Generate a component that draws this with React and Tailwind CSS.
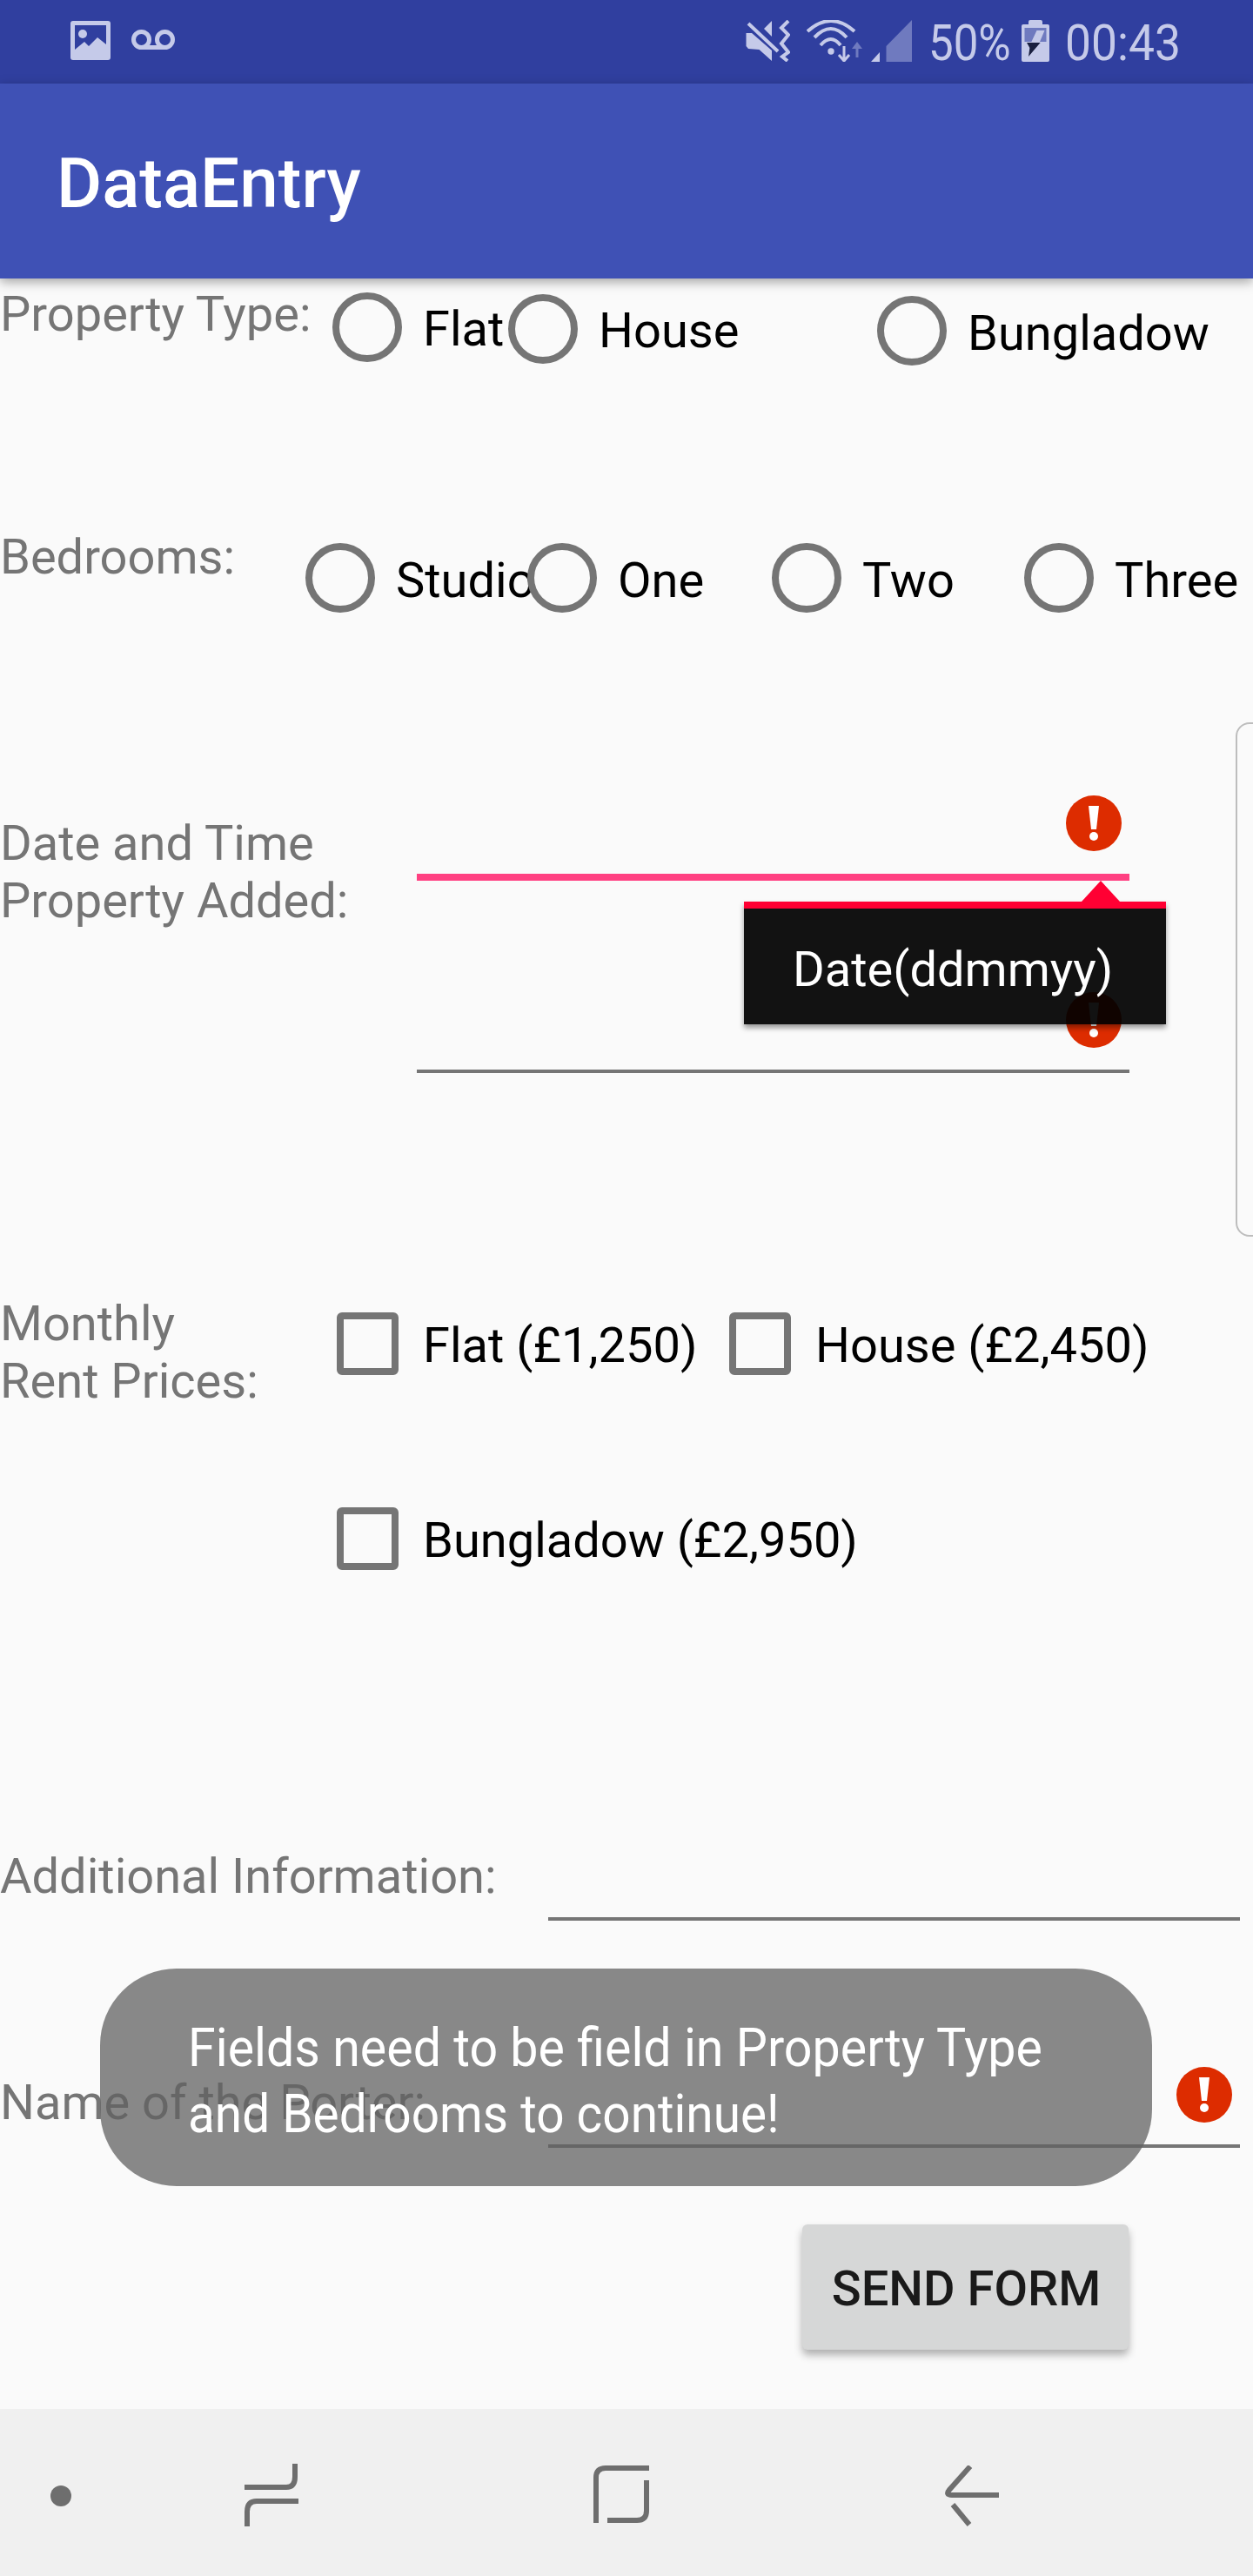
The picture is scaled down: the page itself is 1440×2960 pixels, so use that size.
import React from 'react';

function ErrorIcon() {
  return (
    <svg width="64" height="64" viewBox="0 0 64 64" className="block">
      <circle cx="32" cy="32" r="32" fill="#DD2C00" />
      <polygon points="26,12 38,12 35,39 29,39" fill="#fff" />
      <circle cx="32" cy="47" r="5" fill="#fff" />
    </svg>
  );
}

function Radio({ label, width, top, textTop }) {
  return (
    <div className={`flex items-start gap-[24px] text-[56px] leading-[66px] text-black ${width} ${top}`}>
      <span className="w-20 h-20 shrink-0 rounded-full border-8 border-[#757575]" />
      <span className={`whitespace-nowrap ${textTop}`}>{label}</span>
    </div>
  );
}

function Check({ label, width }) {
  return (
    <div className={`flex items-start gap-[28px] text-[56px] leading-[66px] text-black ${width}`}>
      <span className="w-[71px] h-[72px] shrink-0 rounded-[6px] border-8 border-[#757575]" />
      <span className="whitespace-nowrap mt-[5px]">{label}</span>
    </div>
  );
}

function StatusIcons() {
  const light = '#C5CAE9';
  const dim = '#6F7ABF';
  return (
    <>
      <svg width="51" height="48" viewBox="0 0 51 48" className="mr-[19px]">
        <polygon points="0.5,15 7,15 30,35 30,47 15.5,34 3,33 0.5,30" fill={light} />
        <polygon points="30,1 30,19 21,10" fill={light} />
        <line x1="3" y1="4" x2="37" y2="36" stroke={light} strokeWidth="4" />
        <path d="M49 1 L41 9 L49 17 L41 27 L49 37 L42 42 L48 47" fill="none" stroke={light} strokeWidth="4" />
      </svg>
      <svg width="65" height="48" viewBox="0 0 65 48" className="mr-[9px]">
        <path d="M1 13 Q28 -11 55 13" fill="none" stroke={light} strokeWidth="4" />
        <path d="M9 20 Q28 0 46 20" fill="none" stroke={light} strokeWidth="4" />
        <path d="M16 29 Q28 15 39 29" fill="none" stroke={light} strokeWidth="4" />
        <circle cx="28" cy="36" r="3.7" fill={light} />
        <path d="M43 30 V46 M37 40 L43 47 L49 40" fill="none" stroke={light} strokeWidth="3" />
        <path d="M58 33 V43" stroke={dim} strokeWidth="3" />
        <polygon points="52,33 58,25 64,33" fill={dim} />
      </svg>
      <svg width="47" height="48" viewBox="0 0 47 48" className="mr-[19px]">
        <polygon points="0,48 10,48 10,37" fill={light} />
        <polygon points="17.5,48 47,48 47,0 17.5,30" fill={dim} />
      </svg>
      <div className="w-[95px] mr-[12px] -mt-[3px]">
        <span className="block origin-left scale-x-[0.88] whitespace-nowrap text-[58px] leading-[58px] text-[#C5CAE9]">50%</span>
      </div>
      <svg width="32" height="48" viewBox="0 0 32 48" className="mr-[18px]">
        <rect x="8" y="0" width="16" height="7" rx="2" fill={light} />
        <rect x="0" y="5" width="32" height="43" rx="2" fill={light} />
        <rect x="3.5" y="9" width="25" height="16" fill={dim} />
        <polygon points="11.4,25 17.5,12 26.5,12 21,25" fill={light} />
        <polygon points="6,26 21.6,26 8,42 9.4,32" fill="#1A2040" />
      </svg>
      <div className="w-[128px] -mt-[3px]">
        <span className="block origin-left scale-x-[0.92] whitespace-nowrap text-[58px] leading-[58px] text-[#C5CAE9]">00:43</span>
      </div>
    </>
  );
}

export default function App() {
  return (
    <div className="relative w-[1440px] h-[2960px] overflow-hidden flex flex-col bg-[#FAFAFA] font-['Roboto',sans-serif]">
      {/* status bar */}
      <div className="h-[96px] shrink-0 bg-[#303F9F] flex items-start justify-between pt-[23px] pl-[81px] pr-[88px]">
        <div className="flex items-start">
          <svg width="46" height="45" viewBox="0 0 46 45" className="mr-[24px] mt-px">
            <rect width="46" height="45" rx="3" fill="#C5CAE9" />
            <rect x="5" y="5" width="36" height="32" fill="#303F9F" />
            <circle cx="14" cy="15" r="5" fill="#C5CAE9" />
            <polygon points="5,33 16,24 21,29 31,19 41,27 41,40 5,40" fill="#C5CAE9" />
          </svg>
          <svg width="50" height="23" viewBox="0 0 50 23" className="mt-[11px]">
            <circle cx="11.5" cy="11.5" r="9" fill="none" stroke="#C5CAE9" strokeWidth="5" />
            <circle cx="38.5" cy="11.5" r="9" fill="none" stroke="#C5CAE9" strokeWidth="5" />
            <line x1="11.5" y1="20.5" x2="38.5" y2="20.5" stroke="#C5CAE9" strokeWidth="5" />
          </svg>
        </div>
        <div className="flex items-start">
          <StatusIcons />
        </div>
      </div>

      {/* app bar */}
      <div className="relative z-10 h-[224px] shrink-0 bg-[#3F51B5] pt-[75px] pl-[65px] shadow-[0_4px_12px_rgba(0,0,0,0.35)]">
        <h1 className="text-[80px] leading-[80px] font-medium text-white">DataEntry</h1>
      </div>

      {/* form */}
      <div className="flex-1 flex flex-col text-[56px] leading-[66px] text-[#757575]">
        <div className="flex items-start h-[287px]">
          <div className="w-[382px] shrink-0 pt-[8px] whitespace-nowrap">Property Type:</div>
          <Radio label="Flat" width="w-[202px]" top="mt-[16px]" textTop="mt-[9px]" />
          <Radio label="House" width="w-[424px]" top="mt-[18px]" textTop="mt-[9px]" />
          <Radio label="Bungladow" width="w-[400px]" top="mt-[20px]" textTop="mt-[10px]" />
        </div>

        <div className="flex items-start h-[307px]">
          <div className="w-[351px] shrink-0">Bedrooms:</div>
          <Radio label="Studio" width="w-[255px]" top="mt-[17px]" textTop="mt-[10px]" />
          <Radio label="One" width="w-[281px]" top="mt-[17px]" textTop="mt-[10px]" />
          <Radio label="Two" width="w-[290px]" top="mt-[17px]" textTop="mt-[10px]" />
          <Radio label="Three" width="w-[240px]" top="mt-[17px]" textTop="mt-[10px]" />
        </div>

        <div className="flex items-start h-[574px]">
          <div className="w-[479px] shrink-0 pt-[22px]">
            Date and Time
            <br />
            Property Added:
          </div>
          <div className="w-[819px] shrink-0">
            <div className="h-[98px] border-b-8 border-[#FF4081] flex justify-end pr-[9px]">
              <ErrorIcon />
            </div>
            <div className="h-[221px] border-b-4 border-[#757575] flex justify-end pr-[9px] pt-[128px]">
              <ErrorIcon />
            </div>
          </div>
        </div>

        <div className="flex items-start h-[635px]">
          <div className="w-[387px] shrink-0">
            Monthly
            <br />
            Rent Prices:
          </div>
          <div className="flex flex-wrap pt-[20px] gap-y-[152px]">
            <Check label="Flat (£1,250)" width="w-[451px]" />
            <Check label="House (£2,450)" width="w-[520px]" />
            <Check label="Bungladow (£2,950)" width="w-[700px]" />
          </div>
        </div>

        <div className="flex items-start h-[252px]">
          <div className="w-[630px] shrink-0 whitespace-nowrap">Additional Information:</div>
          <div className="w-[795px] h-[84px] border-b-4 border-[#757575]" />
        </div>

        <div className="flex items-start h-[181px]">
          <div className="w-[630px] shrink-0 pt-[8px] whitespace-nowrap">Name of the Porter:</div>
          <div className="w-[795px] h-[93px] border-b-4 border-[#757575] flex justify-end pr-[9px]">
            <ErrorIcon />
          </div>
        </div>

        <div className="flex justify-end pr-[143px]">
          <button className="w-[375px] h-[144px] pt-[3px] pl-[2px] rounded-[6px] bg-[#D6D7D7] text-[56px] font-medium text-[#1A1A1A] shadow-[0_6px_10px_rgba(0,0,0,0.3)]">
            SEND FORM
          </button>
        </div>
      </div>

      {/* nav bar */}
      <div className="h-[192px] shrink-0 bg-[#F0F0F0] flex items-start pt-[65px] pl-[58px]">
        <span className="mt-[23px] w-[24px] h-[24px] rounded-full bg-[#6E6E6E]" />
        <svg width="62" height="72" viewBox="0 0 62 72" className="ml-[199px] -mt-[2px]">
          <path d="M0 27 H48 Q58 27 58 15 V0 M62 43 H14 Q3 43 3 55 V72" fill="none" stroke="#6E6E6E" strokeWidth="6" />
        </svg>
        <svg width="64" height="68" viewBox="0 0 64 68" className="ml-[339px]">
          <path d="M3 66 V14 Q3 3 14 3 H64" fill="none" stroke="#6E6E6E" strokeWidth="6" />
          <path d="M61 17 V52 Q61 63 50 63 H16" fill="none" stroke="#6E6E6E" strokeWidth="6" />
        </svg>
        <svg width="62" height="70" viewBox="0 0 62 70" className="ml-[340px]">
          <path d="M29 1 L5 28 Q0 34 8 34 H62" fill="none" stroke="#6E6E6E" strokeWidth="6" />
          <path d="M9 45 L28 68" fill="none" stroke="#6E6E6E" strokeWidth="6" />
        </svg>
      </div>

      {/* error tooltip */}
      <div className="absolute z-20 left-[855px] top-[1036px] w-[485px] h-[141px] bg-[rgba(0,0,0,0.93)] border-t-8 border-[#FF0033] text-[56px] leading-[66px] text-white pl-[56px] pt-[37px] whitespace-nowrap shadow-[0_4px_6px_rgba(0,0,0,0.4)]">
        Date(ddmmyy)
      </div>
      <svg width="44" height="24" viewBox="0 0 44 24" className="absolute z-20 left-[1243px] top-[1012px]">
        <polygon points="22,0 44,24 0,24" fill="#FF0033" />
      </svg>

      {/* edge panel handle */}
      <div className="absolute left-[1420px] top-[830px] w-[40px] h-[591px] rounded-l-[16px] border-2 border-[#BDBDBD]" />

      {/* toast */}
      <div className="absolute z-30 left-[115px] top-[2262px] w-[1209px] h-[250px] rounded-[88px] bg-[rgba(97,97,97,0.75)] pl-[101px] pt-[53px] text-[62px] leading-[76px] text-white">
        <span className="block origin-left scale-x-[0.925] whitespace-nowrap">Fields need to be field in Property Type</span>
        <span className="block origin-left scale-x-[0.915] whitespace-nowrap">and Bedrooms to continue!</span>
      </div>
    </div>
  );
}
